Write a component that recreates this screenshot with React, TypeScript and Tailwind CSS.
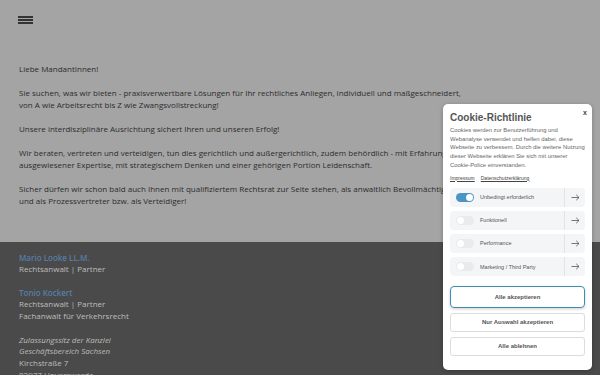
import React from "react";

const Row = ({ label, on }: { label: string; on?: boolean }) => (
  <div className="flex h-[19px] items-center rounded-[4px] bg-[#f4f5f7]">
    <div className="flex flex-1 items-center gap-[6px] pl-[6px]">
      <div
        className={
          on
            ? "flex h-[9px] w-[18px] items-center justify-end rounded-full bg-[#4a95c6] pr-[1px]"
            : "flex h-[9px] w-[18px] items-center justify-start rounded-full bg-[#e9eaec] pl-[1px]"
        }
      >
        <div className="h-[7px] w-[7px] rounded-full bg-white" />
      </div>
      <span className="text-[5.5px] text-[#555]">{label}</span>
    </div>
    <div className="flex h-full w-[21px] items-center justify-center border-l border-[#e2e3e6] text-[#555]">
      <svg width="9" height="7" viewBox="0 0 9 7" fill="none" stroke="#555" strokeWidth="0.8">
        <path d="M0.5 3.5H8M5.2 0.8L8 3.5L5.2 6.2" />
      </svg>
    </div>
  </div>
);

export default function App() {
  return (
    <div className="relative h-[375px] w-[600px] overflow-hidden bg-[#a4a4a4] font-['Open_Sans',sans-serif]">
      <div className="px-[18px] pb-[35px] pt-[16px]">
        <div className="flex w-[15px] flex-col gap-[1.6px]">
          <div className="h-[1.5px] bg-[#333]" />
          <div className="h-[1.5px] bg-[#333]" />
          <div className="h-[1.5px] bg-[#333]" />
        </div>
        <div className="mt-[39px] pl-[1px] text-[8px] leading-[12px] text-[#2c2c2c]">
          <p>Liebe MandantInnen!</p>
          <p className="mt-[12px]">
            Sie suchen, was wir bieten - praxisverwertbare Lösungen für Ihr rechtliches Anliegen, individuell und maßgeschneidert,
            <br />
            von A wie Arbeitsrecht bis Z wie Zwangsvollstreckung!
          </p>
          <p className="mt-[12px]">Unsere interdisziplinäre Ausrichtung sichert Ihren und unseren Erfolg!</p>
          <p className="mt-[12px] whitespace-nowrap">
            Wir beraten, vertreten und verteidigen, tun dies gerichtlich und außergerichtlich, zudem behördlich - mit Erfahrung und
            <br />
            ausgewiesener Expertise, mit strategischem Denken und einer gehörigen Portion Leidenschaft.
          </p>
          <p className="mt-[12px]">
            <span className="block w-[437px] whitespace-nowrap text-justify [text-align-last:justify]">
              Sicher dürfen wir schon bald auch Ihnen mit qualifiziertem Rechtsrat zur Seite stehen, als anwaltlich Bevollmächtigter
            </span>
            <span className="block">und als Prozessvertreter bzw. als Verteidiger!</span>
          </p>
        </div>
      </div>
      <div className="bg-[#4a4a4a] px-[19px] pb-[20px] pt-[10px] text-[8px] leading-[11.7px] text-[#bdbdbd]">
        <p className="font-semibold text-[#587ea6]">Mario Looke LL.M.</p>
        <p>Rechtsanwalt | Partner</p>
        <p className="mt-[11.7px] font-semibold text-[#587ea6]">Tonio Kockert</p>
        <p>Rechtsanwalt | Partner</p>
        <p>Fachanwalt für Verkehrsrecht</p>
        <p className="mt-[11.7px] italic">Zulassungssitz der Kanzlei</p>
        <p className="italic">Geschäftsbereich Sachsen</p>
        <p>Kirchstraße 7</p>
        <p>02977 Hoyerswerda</p>
      </div>

      <div className="absolute left-[443px] top-[104px] w-[149px] rounded-[5px] bg-white px-[7px] pb-[14px] pt-[7px] font-['Liberation_Sans',Arial,sans-serif] shadow-[0_1px_4px_rgba(0,0,0,0.25)]">
        <button className="absolute right-[5px] top-[4px] text-[7px] font-bold text-[#444]">x</button>
        <h2 className="text-[10px] font-bold leading-[14px] text-[#555]">Cookie-Richtlinie</h2>
        <p className="mt-[1px] text-[5.85px] leading-[8.7px] text-[#666]">
          Cookies werden zur Benutzerführung und Webanalyse verwendet und helfen dabei, diese Webseite zu verbessern. Durch die weitere Nutzung dieser Webseite erklären Sie sich mit unserer Cookie-Police einverstanden.
        </p>
        <div className="mt-[4px] flex gap-[6px] text-[5px] leading-[8px] text-[#444] underline">
          <span>Impressum</span>
          <span>Datenschutzerklärung</span>
        </div>
        <div className="mt-[6px] flex flex-col gap-[4.3px]">
          <Row label="Unbedingt erforderlich" on />
          <Row label="Funktionell" />
          <Row label="Performance" />
          <Row label="Marketing / Third Party" />
        </div>
        <div className="mt-[10px] flex flex-col gap-[5px] text-[6px] font-bold text-[#555]">
          <button className="h-[22px] rounded-[4px] border-[1.5px] border-[#3f8db0] shadow-[0_1px_3px_rgba(0,0,0,0.2)]">Alle akzeptieren</button>
          <button className="h-[19px] rounded-[3px] border border-[#dcdcdc]">Nur Auswahl akzeptieren</button>
          <button className="h-[19px] rounded-[3px] border border-[#dcdcdc]">Alle ablehnen</button>
        </div>
      </div>
    </div>
  );
}
